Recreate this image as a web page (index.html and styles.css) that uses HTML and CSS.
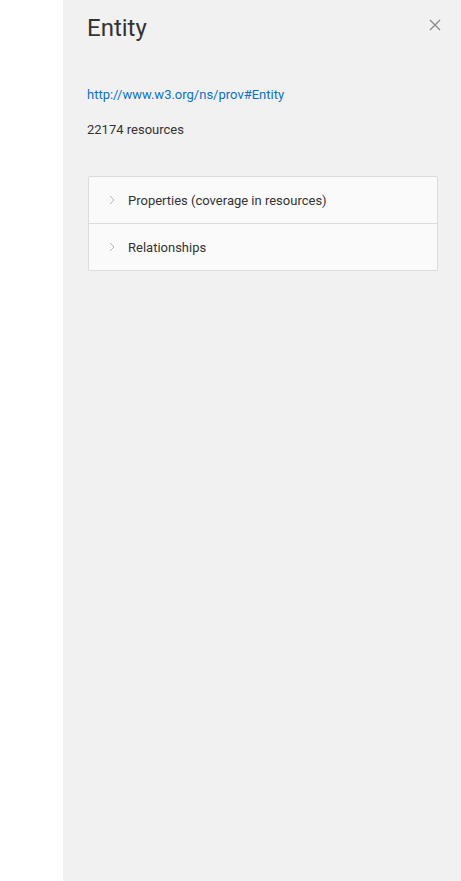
FILE: index.html
```html
<!DOCTYPE html>
<html>
<head>
  <meta charset="UTF-8">
  <title>Entity</title>
  <link rel="stylesheet" href="styles.css">
</head>
<body>
  <div class="page">
    <div class="gutter"></div>
    <aside class="panel">
      <div class="panel-head">
        <h1>Entity</h1>
        <button class="close" aria-label="Close">
          <svg width="12" height="12" viewBox="0 0 12 12"><path d="M1 1L11 11M11 1L1 11" stroke="#888" stroke-width="1.3" fill="none"/></svg>
        </button>
      </div>
      <a class="uri" href="#">http://www.w3.org/ns/prov#Entity</a>
      <p class="count">22174 resources</p>
      <div class="accordion">
        <div class="acc-item">
          <span class="chev"><svg width="6" height="10" viewBox="0 0 6 10"><path d="M1 1L5 5L1 9" stroke="#b5b5b5" stroke-width="1" fill="none"/></svg></span>
          <span>Properties (coverage in resources)</span>
        </div>
        <div class="acc-item">
          <span class="chev"><svg width="6" height="10" viewBox="0 0 6 10"><path d="M1 1L5 5L1 9" stroke="#b5b5b5" stroke-width="1" fill="none"/></svg></span>
          <span>Relationships</span>
        </div>
      </div>
    </aside>
  </div>
</body>
</html>
```

FILE: styles.css
```css
* { box-sizing: border-box; }
body {
  margin: 0;
  padding: 0;
  font-family: Roboto, "Noto Sans", sans-serif;
  background: #fff;
  color: #333;
}
.page {
  display: flex;
  height: 881px;
}
.gutter {
  width: 63px;
  flex: none;
}
/* side panel */
.panel {
  flex: 1;
  background: #f1f1f1;
  padding: 14px 23px 0 24px;
}
.panel-head {
  display: flex;
  justify-content: space-between;
  align-items: flex-start;
}
h1 {
  margin: 0;
  font-size: 24px;
  font-weight: 400;
  color: #333;
  line-height: 28px;
}
.close {
  border: none;
  background: none;
  padding: 0;
  margin: 5px -3px 0 0;
  cursor: pointer;
}
.uri {
  display: block;
  margin-top: 44px;
  font-size: 13px;
  color: #0b73c1;
  text-decoration: none;
  line-height: 18px;
}
.count {
  margin: 17px 0 0;
  font-size: 13px;
  line-height: 18px;
  color: #333;
}
.accordion {
  margin-top: 37px;
  margin-left: 1px;
  border: 1px solid #dcdcdc;
  border-radius: 2px;
  background: #fafafa;
}
.acc-item {
  display: flex;
  align-items: center;
  height: 46px;
  padding-left: 20px;
  font-size: 13px;
  color: #333;
}
.acc-item + .acc-item {
  height: 47px;
  border-top: 1px solid #dcdcdc;
}
.chev {
  display: flex;
  width: 19px;
}
```
